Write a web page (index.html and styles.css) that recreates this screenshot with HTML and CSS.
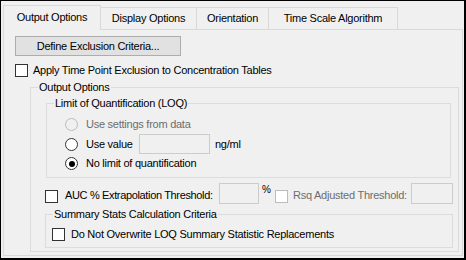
FILE: index.html
```html
<!DOCTYPE html>
<html>
<head>
<meta charset="utf-8">
<title>Output Options</title>
<link rel="stylesheet" href="styles.css">
</head>
<body>

<div class="window">

<!-- tabs -------------------------------------------------------------->
<div class="tabs">
	<div class="tab tab1 selected">Output Options</div>
	<div class="tab tab2">Display Options</div>
	<div class="tab tab3">Orientation</div>
	<div class="tab tab4">Time Scale Algorithm</div>
</div>

<!-- page -------------------------------------------------------------->
<div class="page">
	<div class="button">Define Exclusion Criteria...</div>

	<div class="row apply">
		<span class="check"></span>
		<span class="label">Apply Time Point Exclusion to Concentration Tables</span>
	</div>

	<div class="group outer">
		<div class="title">Output Options</div>

		<div class="group loq">
			<div class="title">Limit of Quantification (LOQ)</div>
			<div class="row radio-row r1">
				<span class="radio disabled"></span>
				<span class="label gray">Use settings from data</span>
			</div>
			<div class="row radio-row r2">
				<span class="radio"></span>
				<span class="label value-label">Use value</span>
				<span class="textbox value-box"></span>
				<span class="label unit">ng/ml</span>
			</div>
			<div class="row radio-row r3">
				<span class="radio checked"></span>
				<span class="label">No limit of quantification</span>
			</div>
		</div>

		<div class="auc">
			<span class="check auc-check"></span>
			<span class="label auc-label">AUC % Extrapolation Threshold:</span>
			<span class="textbox auc-box"></span>
			<span class="label pct">%</span>
			<span class="check disabled rsq-check"></span>
			<span class="label gray rsq-label">Rsq Adjusted Threshold:</span>
			<span class="textbox rsq-box"></span>
		</div>

		<div class="group summary">
			<div class="title">Summary Stats Calculation Criteria</div>
			<div class="row sum-row">
				<span class="check"></span>
				<span class="label">Do Not Overwrite LOQ Summary Statistic Replacements</span>
			</div>
		</div>
	</div>
</div>

</div>

</body>
</html>
```

FILE: styles.css
```css
* {box-sizing:border-box;}
body {margin:0; background:#f0f0f0; font-family:"Liberation Sans", Arial, sans-serif; font-size:11px; letter-spacing:-0.25px; color:#000;}

.window {
	width:466px; height:260px; background:#f0f0f0;
	border-top:1px solid #000; border-left:1px solid #000;
	border-right:2px solid #000; border-bottom:2px solid #000;
	padding:4px 0 0 2px;
}

/* tabs */
.tabs {display:flex; align-items:flex-end; height:24px;}
.tab {
	height:22px; line-height:21px; text-align:center; background:#f0f0f0;
	border:1px solid #d9d9d9; border-bottom:none; margin-left:-1px;
}
.tab.selected {height:25px; line-height:22px; margin-bottom:-1px; position:relative; z-index:1; margin-left:0;}
.tab1 {width:98px;}
.tab2 {width:97px;}
.tab3 {width:73px;}
.tab4 {width:130px;}

.page {width:460px; height:227px; border:1px solid #d9d9d9; padding-top:6px;}

/* controls */
.button {
	width:166px; height:20px; margin-left:11px; line-height:18px; text-align:center;
	background:#e1e1e1; border:1px solid #adadad;
}
.row {display:flex; align-items:center;}
.label {line-height:13px; white-space:nowrap;}
.gray {color:#6d6d6d;}

.check {width:13px; height:13px; border:1px solid #333; background:#fff; flex:none;}
.check.disabled {border-color:#bcbcbc;}
.radio {width:13px; height:13px; border:1px solid #333; border-radius:50%; background:#fff; flex:none;
	display:flex; align-items:center; justify-content:center;}
.radio.disabled {border-color:#bcbcbc; background:#f0f0f0;}
.radio.checked::after {content:""; width:6px; height:6px; border-radius:50%; background:#000;}
.textbox {height:20px; border:1px solid #cccccc; background:#f0f0f0; flex:none;}

.apply {height:13px; margin:8px 0 0 11px;}
.apply .label {margin-left:5px;}

/* group boxes */
.group {border:1px solid #dcdcdc;}
.title {display:table; margin:-7px 0 0 7px; padding:0 1px; background:#f0f0f0; line-height:13px;}
.outer {width:429px; height:165px; margin:10px 0 0 26px;}

.loq {width:405px; height:75px; margin:9px 0 0 15px;}
.loq .title {margin-bottom:4px;}
.radio-row {height:20px; padding-left:18px;}
.radio-row .label {margin-left:8px;}
.r3 {height:19px;}
.value-label {width:53px;}
.value-box {width:71px;}
.radio-row .unit {margin-left:5px;}

.auc {display:flex; align-items:flex-start; height:21px; margin:5px 0 0 14px;}
.auc-check {margin-top:7px;}
.auc-label {width:154px; margin:6px 0 0 7px; letter-spacing:-0.35px;}
.auc-box {width:40px; height:21px;}
.pct {width:9px; margin:0 0 0 3px; font-size:10px;}
.rsq-check {margin:7px 0 0 4px;}
.rsq-label {width:118px; margin:6px 0 0 5px;}
.rsq-box {width:42px; height:21px;}

.summary {width:408px; height:34px; margin:10px 0 0 14px;}
.sum-row {height:13px; margin:7px 0 0 6px;}
.sum-row .label {margin-left:6px;}
```
